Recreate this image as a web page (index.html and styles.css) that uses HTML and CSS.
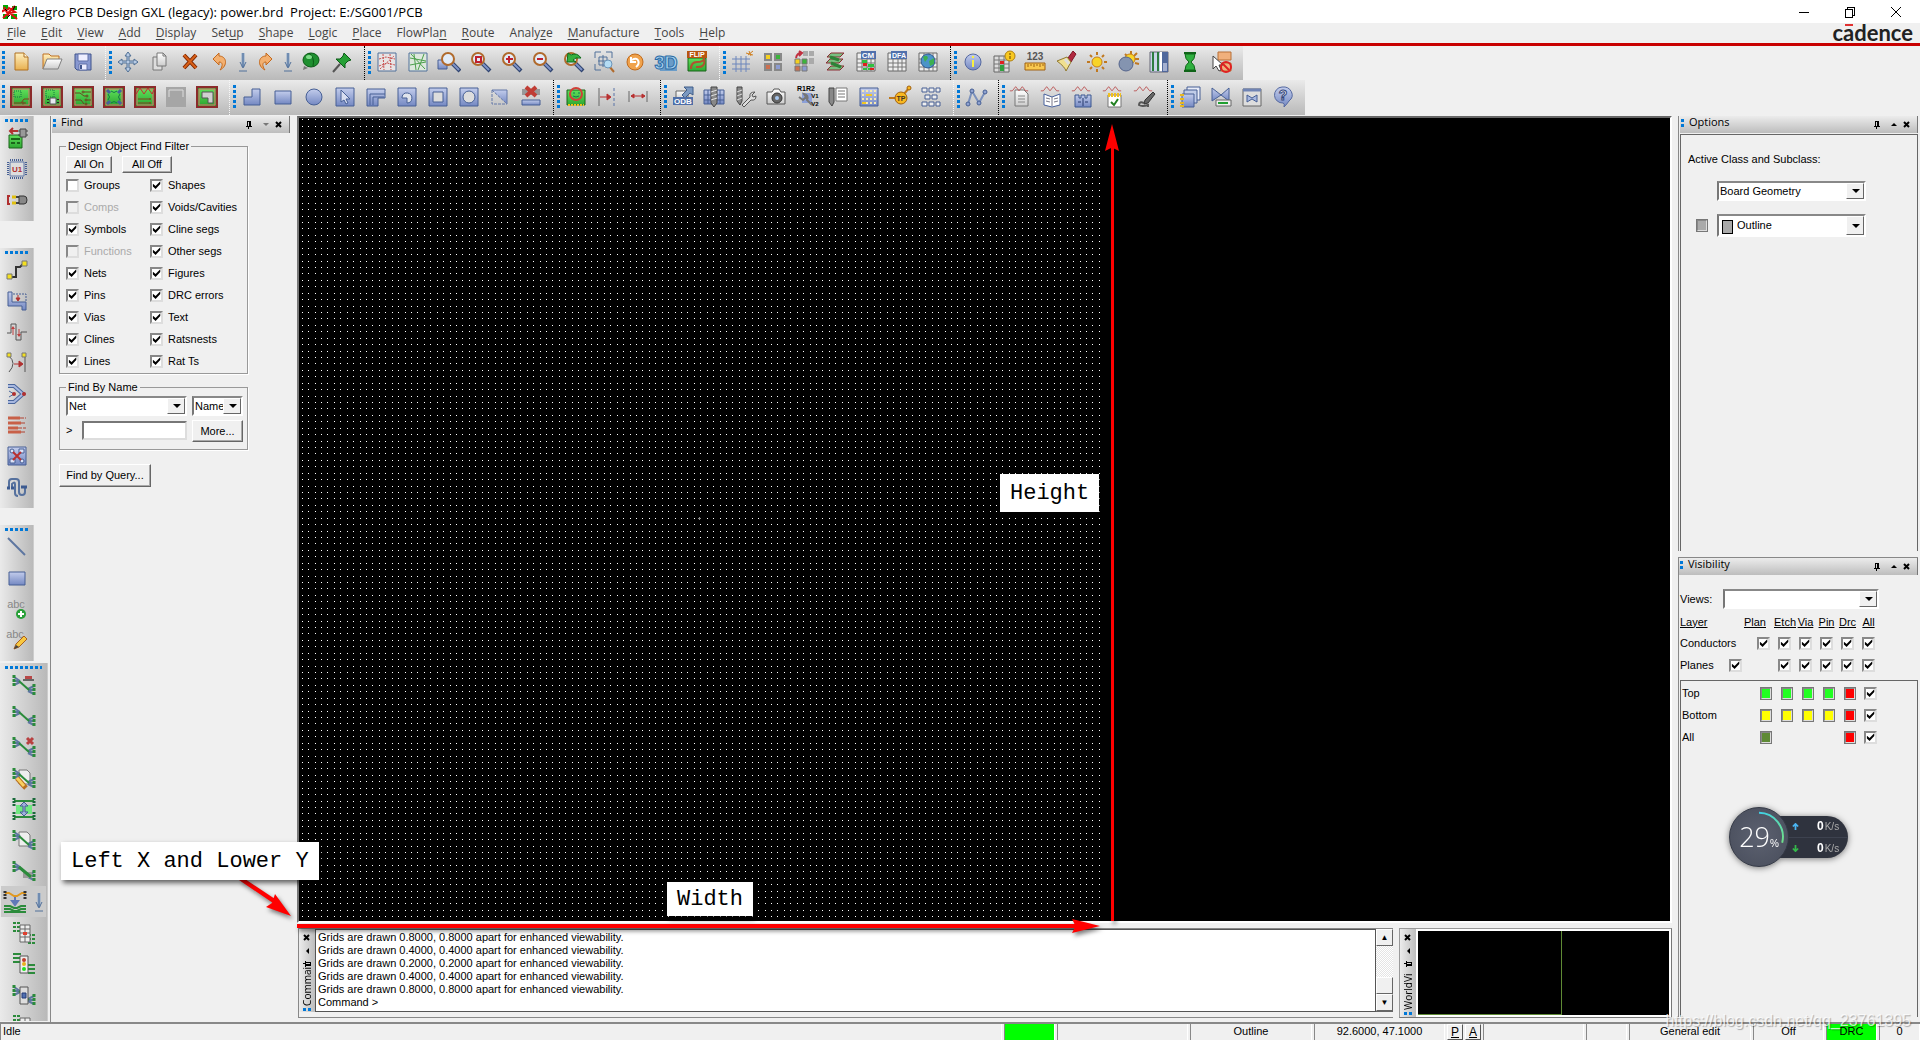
FILE: index.html
```html
<!DOCTYPE html>
<html lang="en">
<head>
<meta charset="utf-8">
<title>Allegro PCB Design GXL (legacy): power.brd Project: E:/SG001/PCB</title>
<link rel="stylesheet" href="styles.css">
</head>
<body>
<svg class="defs" aria-hidden="true">
<defs>
<linearGradient id="gb" x1="0" y1="0" x2="0" y2="1"><stop offset="0" stop-color="#c3cdec"/><stop offset="1" stop-color="#7488c2"/></linearGradient>
<linearGradient id="gy" x1="0" y1="0" x2="0" y2="1"><stop offset="0" stop-color="#fff0c0"/><stop offset="1" stop-color="#e8b050"/></linearGradient>
<linearGradient id="gg" x1="0" y1="0" x2="0" y2="1"><stop offset="0" stop-color="#5fe05a"/><stop offset="1" stop-color="#2ea832"/></linearGradient>
<linearGradient id="gw" x1="0" y1="0" x2="0" y2="1"><stop offset="0" stop-color="#fff"/><stop offset="1" stop-color="#ccc"/></linearGradient>
<linearGradient id="arc" x1="0" y1="0" x2="1" y2="1"><stop offset="0" stop-color="#3fd0e8"/><stop offset="1" stop-color="#6fe08a"/></linearGradient>

<symbol id="app" viewBox="0 0 16 16"><path d="M1 1h5v4H1zM10 2h5v4h-5zM1 10h5v5H1zM9 10h6v5H9z" fill="#0a0"/><path d="M0 8c3-5 5 1 7-4l6 4-5 1 7 6M1 14l12-12M2 3l5 9" stroke="#e01010" stroke-width="2" fill="none"/><path d="M3 5l2 2M11 6l2-4M5 14l3-3" stroke="#000"/></symbol>

<symbol id="new" viewBox="0 0 24 24"><path d="M6 3h9l4 4v13H6z" fill="url(#gy)" stroke="#b07020"/><path d="M15 3v4h4" fill="#fff8e0" stroke="#b07020"/></symbol>
<symbol id="open" viewBox="0 0 24 24"><path d="M3 19V4h6l2 2h8v4" fill="url(#gy)" stroke="#c07020"/><path d="M3 19L7 9h15l-4 10z" fill="url(#gw)" stroke="#808080"/></symbol>
<symbol id="save" viewBox="0 0 24 24"><path d="M4 4h16v16H6l-2-2z" fill="#8898d0" stroke="#40548c"/><path d="M7 4h10v7H7zM8 14h8v6H8z" fill="#eef" stroke="#6070a8"/><path d="M9 15h2v4H9z" fill="#40548c"/></symbol>
<symbol id="move" viewBox="0 0 24 24"><path d="M12 2l3 4h-2v5h5V9l4 3-4 3v-2h-5v5h2l-3 4-3-4h2v-5H6v2l-4-3 4-3v2h5V6H9z" fill="#b8cbe4" stroke="#4f6f94"/></symbol>
<symbol id="copy" viewBox="0 0 24 24"><path d="M6 7h9v13H6z" fill="#ddd" stroke="#777"/><path d="M10 3h6l3 3v10h-9z" fill="url(#gw)" stroke="#777"/><path d="M16 3v3h3" fill="none" stroke="#777"/></symbol>
<symbol id="del" viewBox="0 0 24 24"><path d="M6 5l12 13M18 5L6 18" stroke="#7c2400" stroke-width="4"/><path d="M6 5l12 13M18 5L6 18" stroke="#d86018" stroke-width="2"/></symbol>
<symbol id="undo" viewBox="0 0 24 24"><path d="M4 9l6-6v3c8 0 9 10 1 14 3-4 3-8-1-8v3z" fill="#f3b070" stroke="#c4681c"/></symbol>
<symbol id="redo" viewBox="0 0 24 24"><path d="M18 9l-6-6v3c-8 0-9 10-1 14-3-4-3-8 1-8v3z" fill="#f3b070" stroke="#c4681c"/></symbol>
<symbol id="down" viewBox="0 0 12 24"><path d="M6 3v14" stroke="#8fa8c8" stroke-width="3"/><path d="M6 3v14M3 12l3 6 3-6" fill="none" stroke="#51709a"/><path d="M2 21h8" stroke="#51709a"/></symbol>
<symbol id="ball" viewBox="0 0 24 24"><path d="M5 16l-1 4 5-2z" fill="#777"/><ellipse cx="12" cy="10" rx="8" ry="7" fill="#1f8f30" stroke="#0b5a16"/><path d="M10 3q6 5 4 13" stroke="#0b5a16" fill="none"/><ellipse cx="10" cy="7" rx="3" ry="2" fill="#7fdc88"/></symbol>
<symbol id="pin" viewBox="0 0 24 24"><path d="M3 22l7-8" stroke="#555" stroke-width="2"/><path d="M14 3l7 7-3 1-3 3v4l-9-9h4l3-3z" fill="#25a035" stroke="#0b5a16"/></symbol>
<symbol id="rats" viewBox="0 0 24 24"><path d="M3 3h18v18H3z" fill="#e8e4e4" stroke="#51709a"/><path d="M4 9l7-2 9 2M4 16l8-3 8 2M8 4l1 16M15 4l1 16M5 19L19 6" stroke="#c85050" stroke-dasharray="2 1" fill="none"/></symbol>
<symbol id="grats" viewBox="0 0 24 24"><path d="M3 3h18v18H3z" fill="#dde8dd" stroke="#51709a"/><path d="M4 8l16 3M4 15l16-3M8 4l2 16M18 4l-6 16M5 4l14 15" stroke="#4ca04c" fill="none"/></symbol>
<symbol id="lens" viewBox="0 0 24 24"><path d="M14 13l8 8" stroke="#2f4470" stroke-width="4"/><path d="M14 13l7 7" stroke="#8094c8" stroke-width="2"/><circle cx="10" cy="9" r="6" fill="#e2ecf8" stroke="#b06a2c" stroke-width="2"/></symbol>
<symbol id="zrect" viewBox="0 0 24 24"><path d="M1 10h9v9H1z" fill="url(#gb)" stroke="#465f94"/><use href="#lens" x="1" y="0" width="24" height="24"/></symbol>
<symbol id="zwin" viewBox="0 0 24 24"><use href="#lens" width="24" height="24"/><path d="M8 7h5v5H8z" fill="none" stroke="#c02030" stroke-width="2"/></symbol>
<symbol id="zin" viewBox="0 0 24 24"><use href="#lens" width="24" height="24"/><path d="M10 6v7M7 9h7" stroke="#c02030" stroke-width="2"/></symbol>
<symbol id="zout" viewBox="0 0 24 24"><use href="#lens" width="24" height="24"/><path d="M7 9h6" stroke="#c02030" stroke-width="2"/></symbol>
<symbol id="zprev" viewBox="0 0 24 24"><use href="#lens" width="24" height="24"/><path d="M6 12l1-9 3 2q6-3 10 3-6-1-8 2l3 2z" fill="#36b040" stroke="#0f6a1a"/></symbol>
<symbol id="zsel" viewBox="0 0 24 24"><path d="M3 8V2h6M14 2h6v6M3 14v6h6M11 5v12M6 11h11M7 7h8v8H7z" fill="none" stroke="#51709a" stroke-width="1"/><path d="M17 16l5 6" stroke="#b06a2c" stroke-width="2"/><circle cx="16" cy="14" r="4" fill="#b4dcf4" stroke="#6b94b8"/></symbol>
<symbol id="refresh" viewBox="0 0 24 24"><circle cx="12" cy="12" r="8" fill="#f0a24c" stroke="#c06a1c"/><path d="M8 7v5h5M9 10c6-4 9 3 4 7" fill="none" stroke="#fff" stroke-width="2"/></symbol>
<symbol id="three" viewBox="0 0 24 24"><path d="M3 6h16l4 5v10H6z" fill="#6a9cc8"/><text x="12" y="19" text-anchor="middle" font-size="18" font-weight="bold" fill="#a9d2f0" stroke="#2c6ca4">3D</text></symbol>
<symbol id="flip" viewBox="0 0 24 24"><path d="M3 8h18v13H3z" fill="url(#gg)" stroke="#1b651b"/><path d="M6 19q0-7 6-7t7-3q2 9-8 8" fill="none" stroke="#b05030" stroke-width="2"/><path d="M2 1h20v7H2z" fill="#b85410"/><text x="12" y="7" text-anchor="middle" font-size="7" font-weight="bold" fill="#fff">FLIP</text></symbol>
<symbol id="grid" viewBox="0 0 24 24"><path d="M6 6v16M11 6v16M16 6v16M2 9h18M2 14h18M2 19h18" stroke="#6c86bc" stroke-width="1"/><path d="M18 5l5-4M19 1l2 5M16 3l7 2" stroke="#d08020"/></symbol>
<symbol id="color" viewBox="0 0 24 24"><g stroke="#888" stroke-width="2"><path d="M4 4h6v6H4z" fill="#f4d020"/><path d="M14 4h6v6h-6z" fill="#3cb43c"/><path d="M4 14h6v6H4z" fill="#cc7050"/><path d="M14 14h6v6h-6z" fill="#8c9cd0"/></g></symbol>
<symbol id="color2" viewBox="0 0 24 24"><path d="M11 1h5v5h-5zM17 1h5v5h-5zM17 8h5v6h-5z" fill="#aaa"/><path d="M4 8q1-5 5-5M7 1l3 2-3 3" stroke="#c03040" stroke-width="2" fill="none"/><g stroke="#777"><path d="M3 9h5v5H3z" fill="#f4d020"/><path d="M10 9h5v5h-5z" fill="#3cb43c"/><path d="M3 16h5v5H3z" fill="#cc7050"/><path d="M10 16h5v5h-5z" fill="#8c9cd0"/></g></symbol>
<symbol id="layers" viewBox="0 0 24 24"><path d="M8 3h13l-4 4H4zM7 9h13l-4 4H3zM8 16h13l-4 4H4z" fill="#78c080" stroke="#8c2c34"/><path d="M7 7l9 3M8 13l10 4" stroke="#2b8436" stroke-width="3"/></symbol>
<symbol id="sheet" viewBox="0 0 24 24"><path d="M3 3h18v18H3z" fill="#eee" stroke="#666"/><path d="M3 9h18M3 13h18M3 17h18M8 3v18M13 3v18M17 3v18" stroke="#777"/></symbol>
<symbol id="cm" viewBox="0 0 24 24"><use href="#sheet" width="24" height="24"/><path d="M8 10h5v3H8zM14 14h6v3h-6zM9 18h4v2H9zM14 18h6v2h-6z" fill="#30c040"/><path d="M9 13h4v3H9zM16 18h4v2h-4z" fill="#e02020"/><path d="M7 1h15v8H7z" fill="#5070ac"/><text x="14" y="8" text-anchor="middle" font-size="8" font-weight="bold" fill="#fff">CM</text></symbol>
<symbol id="dfa" viewBox="0 0 24 24"><use href="#sheet" width="24" height="24"/><path d="M6 1h16v8H6z" fill="#5070ac"/><text x="14" y="8" text-anchor="middle" font-size="7" font-weight="bold" fill="#fff">DFA</text></symbol>
<symbol id="world" viewBox="0 0 24 24"><use href="#sheet" width="24" height="24"/><circle cx="12" cy="11" r="7" fill="#4c94c8" stroke="#305890"/><path d="M7 7q4-3 5 1l-3 4zM13 11l5-3v6l-4 2z" fill="#3cb050"/></symbol>
<symbol id="info" viewBox="0 0 24 24"><circle cx="12" cy="12" r="8" fill="url(#gb)" stroke="#5468a0"/><path d="M12 10v7M12 6v2" stroke="#f8f040" stroke-width="2"/></symbol>
<symbol id="tinfo" viewBox="0 0 24 24"><path d="M2 6h15v16H2z" fill="#ddd" stroke="#666"/><path d="M2 10h15M2 14h15M2 18h15M7 6v16M12 6v16" stroke="#777"/><path d="M8 11h4v3H8z" fill="#e02020"/><path d="M8 15h4v6H8z" fill="#30a040"/><circle cx="18" cy="6" r="5" fill="#f8c820" stroke="#b08010"/><path d="M18 3v2M18 6v3" stroke="#604000"/></symbol>
<symbol id="ruler" viewBox="0 0 24 24"><text x="12" y="10" text-anchor="middle" font-size="10" font-weight="bold" fill="#555">123</text><path d="M2 13h20v7H2z" fill="#f8c850" stroke="#a06010"/><path d="M5 14v3M8 14v2M11 14v3M14 14v2M17 14v3M20 14v2" stroke="#a06010"/></symbol>
<symbol id="brush" viewBox="0 0 24 24"><path d="M14 8l5-7 3 3-5 8z" fill="#b02840" stroke="#801828"/><path d="M3 11l10-4 4 5-5 9q-1-4-9-10z" fill="#f0e090" stroke="#907830"/><path d="M11 9l4 5" stroke="#ddd" stroke-width="3"/></symbol>
<symbol id="sun" viewBox="0 0 24 24"><path d="M12 2v3M12 19v3M2 12h3M19 12h3M5 5l2 2M17 17l2 2M19 5l-2 2M5 19l2-2" stroke="#c07820" stroke-width="2"/><circle cx="12" cy="12" r="5" fill="#f8d428" stroke="#c88018"/></symbol>
<symbol id="shade" viewBox="0 0 24 24"><path d="M15 1v4M19 13l4 1M9 4l2 2M21 3l-3 3M18 9h5" stroke="#c07820" stroke-width="2"/><circle cx="14" cy="9" r="5" fill="#f8d428" stroke="#c88018"/><circle cx="10" cy="14" r="7" fill="#8494b0" stroke="#54648c"/></symbol>
<symbol id="bands" viewBox="0 0 24 24"><path d="M3 2h18v20H3z" fill="#c8d4e8" stroke="#667"/><path d="M5 2h2v19H5zM10 2h2v19h-2z" fill="#2c7c40"/><path d="M13 2h2v19h-2z" fill="#fff"/><path d="M15 2h6v20h-6z" fill="#50689c"/><path d="M16 13h4v8h-4z" fill="#a4b0d0"/></symbol>
<symbol id="glass" viewBox="0 0 24 24"><path d="M7 4h10q0 5-4 8 4 3 4 8H7q0-5 4-8-4-3-4-8z" fill="#30b040" stroke="#0f6418"/><path d="M6 3h12M6 21h12" stroke="#0f6418" stroke-width="2"/></symbol>
<symbol id="nosel" viewBox="0 0 24 24"><path d="M9 2h13v8H9zM11 13h11v8H11z" fill="#f0b07c" stroke="#b87038"/><path d="M4 6v13l3-3 3 5 2-1-2-5h4z" fill="#fff" stroke="#444"/><circle cx="17" cy="17" r="5" fill="none" stroke="#e02020" stroke-width="2"/><path d="M14 14l6 6" stroke="#e02020" stroke-width="2"/></symbol>

<symbol id="pcb" viewBox="0 0 24 24"><path d="M2 2h20v20H2z" fill="#2da531" stroke="#8b2b2b" stroke-width="2"/><path d="M4 4h16v16H4z" fill="url(#gg)" stroke="#e07070"/></symbol>
<symbol id="p1" viewBox="0 0 24 24"><use href="#pcb" width="24" height="24"/><path d="M5 6h7v6H5z" fill="none" stroke="#174" stroke-dasharray="1 1"/><path d="M5 18h7l3-4h5M15 18h2" fill="none" stroke="#804020"/><circle cx="14" cy="18" r="1" stroke="#804020" fill="none"/></symbol>
<symbol id="p2" viewBox="0 0 24 24"><use href="#pcb" width="24" height="24"/><path d="M6 5h8v7H6z" fill="none" stroke="#174" stroke-dasharray="1 1"/><path d="M10 13h6v6h-6z" fill="#e8e8f0" stroke="#555"/><path d="M8 14v1M8 17v1M18 14v1M18 17v1" stroke="#222" stroke-width="2"/></symbol>
<symbol id="p3" viewBox="0 0 24 24"><use href="#pcb" width="24" height="24"/><path d="M4 8h5l4 3h2M4 15h6l3 4M13 7h7M16 15h4" fill="none" stroke="#6b4420"/><g fill="none" stroke="#6b4420"><circle cx="12" cy="7" r="1"/><circle cx="16" cy="11" r="1"/><circle cx="15" cy="15" r="1"/><circle cx="15" cy="19" r="1"/></g></symbol>
<symbol id="p4" viewBox="0 0 24 24"><use href="#pcb" width="24" height="24"/><path d="M9 6q3 3 6 0M9 18q3-3 6 0M6 9q3 3 0 6M18 9q-3 3 0 6" fill="none" stroke="#174" stroke-width="1"/><path d="M5 5l3 3M19 5l-3 3M5 19l3-3M19 19l-3-3" stroke="#46609c" stroke-width="3"/></symbol>
<symbol id="p5" viewBox="0 0 24 24"><use href="#pcb" width="24" height="24"/><path d="M3 9l4-6 4 6 4-6 4 6 3-6" fill="none" stroke="#c03030" stroke-width="1"/><path d="M5 14h11M5 18h11" stroke="#804020"/><circle cx="17" cy="14" r="1" fill="#804020"/><circle cx="17" cy="18" r="1" fill="#804020"/></symbol>
<symbol id="p6" viewBox="0 0 24 24"><path d="M2 2h20v20H2z" fill="#a6a6a6"/><path d="M5 12V5h14v7" fill="none" stroke="#ddd"/></symbol>
<symbol id="p7" viewBox="0 0 24 24"><use href="#pcb" width="24" height="24"/><path d="M7 7h11v11h-5v-5H7z" fill="#d0d0d0" stroke="#555"/></symbol>
<symbol id="s1" viewBox="0 0 24 24"><path d="M12 4h8v16H4v-8h8z" fill="url(#gb)" stroke="#465f94"/></symbol>
<symbol id="s2" viewBox="0 0 24 24"><path d="M4 6h16v13H4z" fill="url(#gb)" stroke="#465f94"/></symbol>
<symbol id="s3" viewBox="0 0 24 24"><circle cx="12" cy="12" r="8" fill="url(#gb)" stroke="#465f94"/></symbol>
<symbol id="s0" viewBox="0 0 24 24"><path d="M3 3h18v18H3z" fill="url(#gb)" stroke="#465f94"/></symbol>
<symbol id="s4" viewBox="0 0 24 24"><use href="#s0" width="24" height="24"/><path d="M8 5v12l3-2 2 4 2-1-2-4h4z" fill="#d8def0" stroke="#465f94"/></symbol>
<symbol id="s5" viewBox="0 0 24 24"><path d="M3 4h18v9h-7v8H3z" fill="url(#gb)" stroke="#465f94"/><path d="M6 20V9h15M9 20v-8h11" fill="none" stroke="#465f94"/></symbol>
<symbol id="s6" viewBox="0 0 24 24"><use href="#s0" width="24" height="24"/><path d="M7 12a5 5 0 1 1 5 6v-5H7z" fill="#e0e4ec" stroke="#465f94"/></symbol>
<symbol id="s7" viewBox="0 0 24 24"><use href="#s0" width="24" height="24"/><path d="M7 7h10v10H7z" fill="#ddd" stroke="#465f94"/></symbol>
<symbol id="s8" viewBox="0 0 24 24"><use href="#s0" width="24" height="24"/><circle cx="12" cy="12" r="6" fill="#ddd" stroke="#465f94"/></symbol>
<symbol id="s9" viewBox="0 0 24 24"><path d="M4 5h15v14z" fill="url(#gb)"/><path d="M4 5h15v14" fill="none" stroke="#6478a8"/><path d="M4 5v14h15M4 5l15 14" fill="none" stroke="#6478a8" stroke-dasharray="3 1"/></symbol>
<symbol id="s10" viewBox="0 0 24 24"><path d="M3 4h18v6H3z" fill="#999"/><path d="M7 2l10 9M17 2L7 11" stroke="#c03c34" stroke-width="4"/><path d="M3 15h18v5H3z" fill="url(#gb)" stroke="#465f94"/></symbol>
<symbol id="drc" viewBox="0 0 24 24"><path d="M3 5h18v15H3z" fill="url(#gg)" stroke="#1b651b"/><path d="M4 20h16" stroke="#f0c020" stroke-width="2" stroke-dasharray="2 1"/><circle cx="12" cy="9" r="6" fill="none" stroke="#d04038" stroke-width="2"/><path d="M9 8h2M14 8h2M9 11q3 2 6 0" stroke="#175" fill="none"/></symbol>
<symbol id="dim1" viewBox="0 0 24 24"><path d="M4 3v18" stroke="#666"/><path d="M19 3v18" stroke="#5a74a8" stroke-dasharray="3 2"/><path d="M5 12h10M12 9l4 3-4 3z" stroke="#b83030" fill="#b83030"/></symbol>
<symbol id="dim2" viewBox="0 0 24 24"><path d="M3 6v11M21 6v11" stroke="#666"/><path d="M5 11h14M8 9l-3 2 3 2zM16 9l3 2-3 2z" stroke="#b83030" fill="#b83030"/></symbol>
<symbol id="odb" viewBox="0 0 24 24"><path d="M5 6h12v8H5z" fill="url(#gw)" stroke="#666"/><path d="M11 10l5-5-3-3h9v8l-3-2-5 5z" fill="#7a98c0" stroke="#3f5c88"/><path d="M2 12h20v8H2z" fill="#4e6ea8"/><text x="12" y="19" text-anchor="middle" font-size="8" font-weight="bold" fill="#fff">ODB</text></symbol>
<symbol id="drill" viewBox="0 0 24 24"><path d="M2 5h20v14H2z" fill="url(#gb)" stroke="#465f94"/><path d="M2 10h20M2 15h20M6 5v14M18 5v14" stroke="#465f94"/><path d="M9 2h6v16l-3 4-3-4z" fill="#888" stroke="#444"/><path d="M9 7l6-2M9 11l6-2M9 15l6-2" stroke="#ddd"/></symbol>
<symbol id="wrench" viewBox="0 0 24 24"><path d="M4 2h5v14l-2 4-3-4z" fill="#888" stroke="#444"/><path d="M4 7l5-2M4 11l5-2M4 15l5-2" stroke="#ddd"/><path d="M9 20l8-8q-1-5 5-5l-3 3 1 2 3-1q0 5-5 4l-7 7z" fill="#ddd" stroke="#555"/></symbol>
<symbol id="camera" viewBox="0 0 24 24"><path d="M3 7h5l2-3h5l2 3h4v12H3z" fill="url(#gw)" stroke="#555"/><circle cx="13" cy="13" r="5" fill="#666" stroke="#333"/><circle cx="13" cy="13" r="2" fill="#a8c8f0"/></symbol>
<symbol id="auto" viewBox="0 0 24 24"><path d="M7 8h10v10H7z" fill="#8ca0d8"/><path d="M4 12l4 3 3-3-2-3q5 1 3 6l5 5" fill="none" stroke="#777" stroke-width="2"/><text x="11" y="6" text-anchor="middle" font-size="7" font-weight="bold" fill="#000">R1R2</text><text x="20" y="13" text-anchor="middle" font-size="6" font-weight="bold" fill="#000">V1</text><text x="20" y="21" text-anchor="middle" font-size="6" font-weight="bold" fill="#000">V2</text></symbol>
<symbol id="dlist" viewBox="0 0 24 24"><path d="M3 3h5v14l-2 4-3-4z" fill="#888" stroke="#444"/><path d="M10 3h11v13H10z" fill="#fff" stroke="#777"/><path d="M12 6h7M12 9h7M12 12h7" stroke="#777"/></symbol>
<symbol id="matrix" viewBox="0 0 24 24"><use href="#s0" width="24" height="24"/><path d="M5 6h14M5 10h14M5 14h14M5 18h14" stroke="#f4e8b0" stroke-width="2" stroke-dasharray="2 2"/><path d="M9 10h6M5 18h4" stroke="#f4c820" stroke-width="2"/></symbol>
<symbol id="tp" viewBox="0 0 24 24"><path d="M1 13h8M16 9l5-6" stroke="#c07818" stroke-width="2"/><circle cx="13" cy="13" r="6" fill="#f8b820" stroke="#a06010"/><circle cx="21" cy="3" r="2" fill="#f8b820" stroke="#a06010"/><text x="13" y="16" text-anchor="middle" font-size="7" font-weight="bold" fill="#432">TP</text></symbol>
<symbol id="mods" viewBox="0 0 24 24"><g fill="#eee" stroke="#465f94"><path d="M3 3h5v4H3zM10 3h5v4h-5zM17 3h4v4h-4zM6 10h5v4H6zM13 10h5v4h-5zM3 17h5v4H3zM10 17h5v4h-5zM17 17h4v4h-4z"/></g></symbol>
<symbol id="net" viewBox="0 0 24 24"><path d="M4 19L8 6l7 12 6-11" fill="none" stroke="#7a90bc" stroke-width="2"/><g fill="#8fa2d0" stroke="#465f94"><circle cx="4" cy="19" r="2"/><circle cx="8" cy="6" r="2"/><circle cx="15" cy="18" r="2"/><circle cx="21" cy="7" r="2"/></g></symbol>
<symbol id="wave" viewBox="0 0 24 24"><path d="M1 7h3l4-5 4 5 4-5 4 5h3" fill="none" stroke="#b84848" stroke-width="1"/></symbol>
<symbol id="w1" viewBox="0 0 24 24"><path d="M6 5h9l4 4v12H6z" fill="url(#gw)" stroke="#777"/><path d="M9 11h7M9 14h7M9 17h7" stroke="#888"/><use href="#wave" width="20" height="20"/></symbol>
<symbol id="w2" viewBox="0 0 24 24"><use href="#wave" width="20" height="20"/><path d="M4 9l8 3 8-3v11l-8 2-8-2z" fill="#fff" stroke="#46609c"/><path d="M12 12v9M6 13l4 1M6 16l4 1M14 14l4-1M14 17l4-1" stroke="#778"/></symbol>
<symbol id="w3" viewBox="0 0 24 24"><use href="#wave" width="20" height="20"/><path d="M4 10h4v3h2v-3h4v3h2v-3h4v12H4z" fill="url(#gb)" stroke="#3a5690"/><path d="M7 17h3M14 17h3M12 13v8" stroke="#24386c"/></symbol>
<symbol id="w4" viewBox="0 0 24 24"><use href="#wave" width="20" height="20"/><path d="M6 10h13v12H6z" fill="#fff" stroke="#777"/><path d="M6 10h13" stroke="#f0c020" stroke-width="4" stroke-dasharray="2 1"/><path d="M9 17l3 3 4-6" fill="none" stroke="#208020" stroke-width="2"/></symbol>
<symbol id="w5" viewBox="0 0 24 24"><use href="#wave" width="20" height="20"/><path d="M12 15l8-8 2 2-7 9-4 1z" fill="#666" stroke="#333"/><path d="M11 18q-5-2-5 2 3 2 9 0v2" fill="none" stroke="#555" stroke-width="2"/></symbol>
<symbol id="rep" viewBox="0 0 24 24"><path d="M9 2h13v13H9z" fill="#e8ecf8" stroke="#465f94"/><path d="M6 5h13v13H6z" fill="#c0cce8" stroke="#465f94"/><path d="M4 9h12v13H4z" fill="url(#gb)" stroke="#465f94"/><path d="M2 10h4M2 14h4M2 18h4M2 21h4" stroke="#e8b820" stroke-width="2"/></symbol>
<symbol id="bow" viewBox="0 0 24 24"><path d="M3 3l9 7 8-7v13l-8-6-9 6z" fill="url(#gb)" stroke="#465f94"/><path d="M7 15h15v6H7z" fill="#eee" stroke="#666"/><path d="M9 18h10" stroke="#20a030" stroke-width="2"/></symbol>
<symbol id="bowin" viewBox="0 0 24 24"><path d="M3 4h18v17H3z" fill="#ddd" stroke="#666"/><path d="M3 5h18" stroke="#7084b4" stroke-width="3"/><path d="M7 10l5 3 5-3v7l-5-3-5 3z" fill="#a8b8e0" stroke="#465f94"/></symbol>
<symbol id="help" viewBox="0 0 24 24"><path d="M11 2a9 8 0 0 1 7 14q-2 3-5 6 1-4-1-4A8 8 0 0 1 11 2z" fill="url(#gb)" stroke="#5468a0"/><text x="12" y="15" text-anchor="middle" font-size="14" font-weight="bold" fill="#fff" stroke="#34487c">?</text></symbol>

<symbol id="v1" viewBox="0 0 24 24"><path d="M4 9h13v13H4z" fill="url(#gg)" stroke="#1b651b"/><path d="M6 13h9M6 17h4M12 17h3" stroke="#1b651b" stroke-width="2"/><path d="M6 5h7M8 2L5 5l3 3" stroke="#b03030" fill="none" stroke-width="2"/><path d="M15 3h6v8h-6z" fill="#999" stroke="#444"/><path d="M13 5h2M13 9h2M21 5h2M21 9h2" stroke="#444"/></symbol>
<symbol id="v2" viewBox="0 0 24 24"><path d="M5 5h14v14H5z" fill="#ddd" stroke="#6078a8"/><path d="M5 3h14M5 21h14" stroke="#465f94" stroke-width="2" stroke-dasharray="1 1"/><path d="M3 5v14M21 5v14" stroke="#465f94" stroke-width="2" stroke-dasharray="1 1"/><text x="12" y="15" text-anchor="middle" font-size="8" font-weight="bold" fill="#b03030">U1</text></symbol>
<symbol id="v3" viewBox="0 0 24 24"><path d="M5 8H3v8h2" stroke="#b03030" fill="none" stroke-width="2"/><path d="M7 9h4M7 15h4" stroke="#e0c010" stroke-width="3"/><path d="M11 9h3M11 15h3" stroke="#444" stroke-width="2"/><path d="M14 8h5q3 0 3 4t-3 4h-5z" fill="#888" stroke="#333"/></symbol>
<symbol id="v4" viewBox="0 0 24 24"><path d="M5 19h6V9h4l4-4" fill="none" stroke="#333" stroke-width="2"/><path d="M2 16h5v5H2zM17 3h5v5h-5z" fill="#f4e020" stroke="#777"/></symbol>
<symbol id="v5" viewBox="0 0 24 24"><path d="M3 3v14h14v4h4v-8H7V3z" fill="url(#gb)" stroke="#465f94"/><path d="M8 5h13v7" fill="none" stroke="#465f94" stroke-dasharray="2 1"/><path d="M13 6v5M11 9l2 3 2-3z" stroke="#b03030" fill="#b03030"/></symbol>
<symbol id="v6" viewBox="0 0 24 24"><path d="M2 13h4V4h5v16h5v-8h6" fill="none" stroke="#555"/><path d="M8 8v7M14 9v7" stroke="#c04040"/><path d="M6 9l2-3 2 3zM12 14l2 3 2-3z" fill="#c04040"/></symbol>
<symbol id="v7" viewBox="0 0 24 24"><path d="M4 5q8 7 0 16M20 5v16" fill="none" stroke="#555"/><path d="M9 13h8M14 10l4 3-4 3z" stroke="#b03030" fill="#b03030"/><path d="M2 2h4v4H2zM17 2h4v4h-4z" fill="#f4e020" stroke="#777"/></symbol>
<symbol id="v8" viewBox="0 0 24 24"><path d="M3 4h6l9 8-9 8H3" fill="none" stroke="#4a669c" stroke-width="4"/><path d="M3 4h6l9 8-9 8H3" fill="none" stroke="#a8b8e0" stroke-width="2"/><path d="M4 9l5 3-5 3" fill="none" stroke="#4a669c"/><circle cx="9" cy="12" r="2" fill="#b03030"/><circle cx="19" cy="12" r="2" fill="#b03030"/></symbol>
<symbol id="v9" viewBox="0 0 24 24"><path d="M3 5h12M3 10h13M3 15h10M3 19h13" stroke="#c86048" stroke-width="3"/><path d="M15 5h6M16 10h5M13 15h8M16 19h5" stroke="#b04030" stroke-dasharray="4 1"/></symbol>
<symbol id="v10" viewBox="0 0 24 24"><use href="#s0" width="24" height="24"/><g fill="#dde4f8" stroke="#465f94"><path d="M14 5h5v4h-5zM5 15h5v4H5z"/><circle cx="7" cy="7" r="2"/><circle cx="17" cy="17" r="2"/></g><path d="M8 8l8 8M16 8l-8 8" stroke="#b83030" stroke-width="2"/></symbol>
<symbol id="v11" viewBox="0 0 24 24"><path d="M4 12V7q0-3 3-3h4q3 0 3 3v10q0 3 3 3t3-3v-5M7 12V9q3-3 3 0v9q0 3 3 3" fill="none" stroke="#56719e" stroke-width="2"/><path d="M2 13h3M6 13h3M16 12h6" stroke="#3c5a90" stroke-width="3"/></symbol>
<symbol id="line" viewBox="0 0 24 24"><path d="M3 3l17 17" stroke="#5d76a0" stroke-width="2"/></symbol>
<symbol id="abc1" viewBox="0 0 24 24"><text x="11" y="11" text-anchor="middle" font-size="11" fill="#888">abc</text><circle cx="16" cy="17" r="5" fill="#28a038"/><path d="M16 14v6M13 17h6" stroke="#fff" stroke-width="2"/></symbol>
<symbol id="abc2" viewBox="0 0 24 24"><text x="10" y="10" text-anchor="middle" font-size="11" fill="#888">abc</text><path d="M9 21l2-5 8-8 3 3-8 8z" fill="#f8c840" stroke="#a86020"/><path d="M9 21l2-4 3 2z" fill="#444"/></symbol>
<symbol id="bun" viewBox="0 0 24 24"><path d="M2 4l6 4M2 8h6M2 12l6-3M22 13l-6 3M22 17h-6M22 21l-6-3" stroke="#5d76a0" stroke-width="2"/><path d="M7 8l10 9" stroke="#2b8b3b" stroke-width="2"/><path d="M2 2v12M22 11v12" stroke="#2b8b3b" stroke-width="3" stroke-dasharray="3 1"/></symbol>
<symbol id="b1" viewBox="0 0 24 24"><use href="#bun" width="24" height="24"/><path d="M13 3h7v4h-7z" fill="#b84848"/><path d="M11 7h11" stroke="#666" stroke-width="2"/></symbol>
<symbol id="b3" viewBox="0 0 24 24"><use href="#bun" width="24" height="24"/><path d="M15 3l6 6M21 3l-6 6" stroke="#b84040" stroke-width="3"/></symbol>
<symbol id="doc" viewBox="0 0 24 24"><path d="M7 4h8l3 3v11H7z" fill="#eee" stroke="#777"/></symbol>
<symbol id="b4" viewBox="0 0 24 24"><use href="#doc" width="24" height="24"/><use href="#bun" width="24" height="24"/><path d="M5 12l7 8 2 2" stroke="#b87020" stroke-width="5"/><path d="M5 12l7 8" stroke="#f8d060" stroke-width="3"/></symbol>
<symbol id="b5" viewBox="0 0 24 24"><path d="M4 8h16v9H4z" fill="#70e880"/><path d="M2 4h20M2 20h20" stroke="#2b8b3b" stroke-width="2"/><path d="M2 1v8M22 1v8M2 15v8M22 15v8" stroke="#1a6a3a" stroke-width="3" stroke-dasharray="2 1"/><path d="M12 5l4 4h-3v6h3l-4 4-4-4h3V9H8z" fill="#9fb0dc" stroke="#465f94"/></symbol>
<symbol id="b6" viewBox="0 0 24 24"><use href="#doc" width="24" height="24"/><use href="#bun" width="24" height="24"/></symbol>
<symbol id="b7" viewBox="0 0 24 24"><use href="#bun" width="24" height="24"/><path d="M11 13h9v6h-9z" fill="#999"/><path d="M7 8l12 10" stroke="#2b8b3b" stroke-width="3"/></symbol>
<symbol id="b8" viewBox="0 0 24 24"><path d="M2 3h4l5 3h3l5-3h4" fill="none" stroke="#e09820" stroke-width="2"/><path d="M2 1v8M22 1v8" stroke="#333" stroke-width="3" stroke-dasharray="2 1"/><path d="M12 7v6M9 11l3 4 3-4z" stroke="#6078b8" stroke-width="2" fill="#a0b0e0"/><path d="M1 16h6l4 2h3l4-2h5M1 19h6l4 2h3l4-2h5M1 22h22" fill="none" stroke="#2b8b3b" stroke-width="2"/></symbol>
<symbol id="b9" viewBox="0 0 24 24"><path d="M1 2h8M1 6h8M1 10h8M16 14h7M16 18h7M16 22h7" stroke="#2b8b3b" stroke-width="2" stroke-dasharray="3 1"/><path d="M8 4h10v17H8z" fill="#eee" stroke="#666"/><path d="M8 8h10M8 12h10M8 16h10M13 4v17" stroke="#666"/><path d="M11 11h4v3h-4z" fill="#e04030"/></symbol>
<symbol id="b10" viewBox="0 0 24 24"><path d="M1 2h8M1 6h8M1 10h8M16 13h7M16 17h7M16 21h7" stroke="#2b8b3b" stroke-width="2"/><path d="M8 4h8v17H8z" fill="#eee" stroke="#555"/><circle cx="12" cy="8" r="2" fill="#c04030"/><circle cx="12" cy="12" r="2" fill="#e8b020"/><circle cx="12" cy="17" r="2" fill="#20e020"/></symbol>
<symbol id="b11" viewBox="0 0 24 24"><use href="#bun" width="24" height="24"/><path d="M8 4h8v17H8z" fill="#ddd" stroke="#555"/><path d="M10 10h4v5h-4z" fill="#5070b0" stroke="#243c78"/></symbol>

<symbol id="tpin" viewBox="0 0 8 8"><path d="M2 0h4v5H2zM3 1v4h1V1zM1 5h6v1H1zM3 6h1v2H3z" fill-rule="evenodd"/></symbol>
<symbol id="tup" viewBox="0 0 8 8"><path d="M1 5h6L4 2z"/></symbol>
<symbol id="tdn" viewBox="0 0 8 8"><path d="M1 2h6L4 5z" fill="#777"/></symbol>
<symbol id="tlf" viewBox="0 0 8 8"><path d="M6 1v6L3 4z"/></symbol>
<symbol id="tx" viewBox="0 0 8 8"><path d="M1 1l5 5M6 1L1 6" stroke="#000" stroke-width="2"/></symbol>
</defs>
</svg>

<div class="app">
<header class="titlebar">
  <svg class="appicon"><use href="#app"/></svg>
  <h1>Allegro PCB Design GXL (legacy): power.brd&nbsp; Project: E:/SG001/PCB</h1>
  <div class="winbtns">
    <button aria-label="Minimize"><svg viewBox="0 0 12 12"><path d="M1 6h10v1H1z"/></svg></button>
    <button aria-label="Restore"><svg viewBox="0 0 12 12"><path d="M1 3h8v9H1zM2 4v7h6V4zM3 1h8v9h-2V9h1V2H4v1H3z" fill-rule="evenodd"/></svg></button>
    <button aria-label="Close"><svg viewBox="0 0 12 12"><path d="M1 1l10 10M11 1L1 11" stroke="#000"/></svg></button>
  </div>
</header>
<nav class="menubar">
  <button><u>F</u>ile</button><button><u>E</u>dit</button><button><u>V</u>iew</button><button><u>A</u>dd</button><button><u>D</u>isplay</button><button>Set<u>u</u>p</button><button><u>S</u>hape</button><button><u>L</u>ogic</button><button><u>P</u>lace</button><button>FlowPla<u>n</u></button><button><u>R</u>oute</button><button>Analy<u>z</u>e</button><button><u>M</u>anufacture</button><button><u>T</u>ools</button><button><u>H</u>elp</button>
  <div class="brand">c<span class="macron">a</span>dence</div>
</nav>

<div class="toolrow">
  <div class="tb"><button aria-label="New"><svg><use href="#new"/></svg></button><button aria-label="Open"><svg><use href="#open"/></svg></button><button aria-label="Save"><svg><use href="#save"/></svg></button></div>
  <div class="tb"><button aria-label="Move"><svg><use href="#move"/></svg></button><button aria-label="Copy"><svg><use href="#copy"/></svg></button><button aria-label="Delete"><svg><use href="#del"/></svg></button><button aria-label="Undo"><svg><use href="#undo"/></svg></button><button class="slim" aria-label="Undo list"><svg><use href="#down"/></svg></button><button aria-label="Redo"><svg><use href="#redo"/></svg></button><button class="slim" aria-label="Redo list"><svg><use href="#down"/></svg></button><button aria-label="Fix"><svg><use href="#ball"/></svg></button><button aria-label="Unfix"><svg><use href="#pin"/></svg></button></div>
  <div class="tb dark"><button aria-label="Unrats all"><svg><use href="#rats"/></svg></button><button aria-label="Rats all"><svg><use href="#grats"/></svg></button><button aria-label="Zoom points"><svg><use href="#zrect"/></svg></button><button aria-label="Zoom fit"><svg><use href="#zwin"/></svg></button><button aria-label="Zoom in"><svg><use href="#zin"/></svg></button><button aria-label="Zoom out"><svg><use href="#zout"/></svg></button><button aria-label="Zoom previous"><svg><use href="#zprev"/></svg></button><button aria-label="Zoom selection"><svg><use href="#zsel"/></svg></button><button aria-label="Redraw"><svg><use href="#refresh"/></svg></button><button aria-label="3D"><svg><use href="#three"/></svg></button><button aria-label="Flip"><svg><use href="#flip"/></svg></button></div>
  <div class="tb"><button aria-label="Grid toggle"><svg><use href="#grid"/></svg></button><button aria-label="Color"><svg><use href="#color"/></svg></button><button aria-label="Color priority"><svg><use href="#color2"/></svg></button><button aria-label="Cross section"><svg><use href="#layers"/></svg></button><button aria-label="Constraint manager"><svg><use href="#cm"/></svg></button><button aria-label="DFA"><svg><use href="#dfa"/></svg></button><button aria-label="World"><svg><use href="#world"/></svg></button></div>
  <div class="tb dark"><button aria-label="Show element"><svg><use href="#info"/></svg></button><button aria-label="Constraint info"><svg><use href="#tinfo"/></svg></button><button aria-label="Measure"><svg><use href="#ruler"/></svg></button><button aria-label="Assign color"><svg><use href="#brush"/></svg></button><button aria-label="Highlight"><svg><use href="#sun"/></svg></button><button aria-label="Dehighlight"><svg><use href="#shade"/></svg></button><button aria-label="Shadow mode"><svg><use href="#bands"/></svg></button><button aria-label="Waive DRC"><svg><use href="#glass"/></svg></button><button aria-label="Datatips"><svg><use href="#nosel"/></svg></button></div>
</div>
<div class="toolrow second">
  <div class="tb"><button aria-label="General edit"><svg><use href="#p1"/></svg></button><button aria-label="Placement edit"><svg><use href="#p2"/></svg></button><button aria-label="Etch edit"><svg><use href="#p3"/></svg></button><button aria-label="Flow planning"><svg><use href="#p4"/></svg></button><button aria-label="Signal integrity"><svg><use href="#p5"/></svg></button><button aria-label="Unused mode" disabled><svg><use href="#p6"/></svg></button><button aria-label="Shape edit"><svg><use href="#p7"/></svg></button></div>
  <div class="tb"><button aria-label="Add polygon"><svg><use href="#s1"/></svg></button><button aria-label="Add rectangle"><svg><use href="#s2"/></svg></button><button aria-label="Add circle"><svg><use href="#s3"/></svg></button><button aria-label="Select shape"><svg><use href="#s4"/></svg></button><button aria-label="Edit boundary"><svg><use href="#s5"/></svg></button><button aria-label="Void polygon"><svg><use href="#s6"/></svg></button><button aria-label="Void rectangle"><svg><use href="#s7"/></svg></button><button aria-label="Void circle"><svg><use href="#s8"/></svg></button><button aria-label="Void element"><svg><use href="#s9"/></svg></button><button aria-label="Delete islands"><svg><use href="#s10"/></svg></button></div>
  <div class="tb dark"><button aria-label="Test prep"><svg><use href="#drc"/></svg></button><button aria-label="Linear dimension"><svg><use href="#dim1"/></svg></button><button aria-label="Edit dimension"><svg><use href="#dim2"/></svg></button></div>
  <div class="tb dark"><button aria-label="ODB out"><svg><use href="#odb"/></svg></button><button aria-label="Drill legend"><svg><use href="#drill"/></svg></button><button aria-label="NC setup"><svg><use href="#wrench"/></svg></button><button aria-label="Artwork"><svg><use href="#camera"/></svg></button><button aria-label="Auto rename"><svg><use href="#auto"/></svg></button><button aria-label="NC drill"><svg><use href="#dlist"/></svg></button><button aria-label="Thieving"><svg><use href="#matrix"/></svg></button><button aria-label="Test point"><svg><use href="#tp"/></svg></button><button aria-label="Panelize"><svg><use href="#mods"/></svg></button></div>
  <div class="tb"><button aria-label="Net schedule"><svg><use href="#net"/></svg></button></div>
  <div class="tb dark"><button aria-label="Signal report"><svg><use href="#w1"/></svg></button><button aria-label="Signal library"><svg><use href="#w2"/></svg></button><button aria-label="Signal model"><svg><use href="#w3"/></svg></button><button aria-label="Signal audit"><svg><use href="#w4"/></svg></button><button aria-label="Signal probe"><svg><use href="#w5"/></svg></button></div>
  <div class="tb dark"><button aria-label="Reports"><svg><use href="#rep"/></svg></button><button aria-label="DRC update"><svg><use href="#bow"/></svg></button><button aria-label="DRC window"><svg><use href="#bowin"/></svg></button><button aria-label="Help"><svg><use href="#help"/></svg></button></div>
</div>

<main class="main">
  <aside class="side">
    <div class="vb"><button aria-label="Place manual"><svg><use href="#v1"/></svg></button><button aria-label="Place component"><svg><use href="#v2"/></svg></button><button aria-label="Swap"><svg><use href="#v3"/></svg></button></div>
    <div class="vb"><button aria-label="Add connect"><svg><use href="#v4"/></svg></button><button aria-label="Slide"><svg><use href="#v5"/></svg></button><button aria-label="Delay tune"><svg><use href="#v6"/></svg></button><button aria-label="Custom smooth"><svg><use href="#v7"/></svg></button><button aria-label="Vertex"><svg><use href="#v8"/></svg></button><button aria-label="Spread"><svg><use href="#v9"/></svg></button><button aria-label="Fanout"><svg><use href="#v10"/></svg></button><button aria-label="Auto route"><svg><use href="#v11"/></svg></button></div>
    <div class="vb"><button aria-label="Add line"><svg><use href="#line"/></svg></button><button aria-label="Add rectangle"><svg><use href="#s2"/></svg></button><button aria-label="Add text"><svg><use href="#abc1"/></svg></button><button aria-label="Edit text"><svg><use href="#abc2"/></svg></button></div>
    <div class="vb wide"><button aria-label="Bundle create"><svg><use href="#b1"/></svg></button><button aria-label="Bundle add"><svg><use href="#bun"/></svg></button><button aria-label="Bundle delete"><svg><use href="#b3"/></svg></button><button aria-label="Bundle edit"><svg><use href="#b4"/></svg></button><button aria-label="Bundle resize"><svg><use href="#b5"/></svg></button><button aria-label="Bundle properties"><svg><use href="#b6"/></svg></button><button aria-label="Flow edit"><svg><use href="#b7"/></svg></button><button class="split" aria-label="Plan convert"><svg><use href="#b8"/></svg><svg class="arr"><use href="#down"/></svg></button><button aria-label="Plan table"><svg><use href="#b9"/></svg></button><button aria-label="Plan status"><svg><use href="#b10"/></svg></button><button aria-label="Plan view"><svg><use href="#b11"/></svg></button><button aria-label="Plan report"><svg><use href="#b9"/></svg></button></div>
  </aside>

  <section class="find">
    <div class="dockhead"><h2>Find</h2><svg><use href="#tpin"/></svg><svg><use href="#tdn"/></svg><svg><use href="#tx"/></svg></div>
    <form class="findbody">
      <fieldset class="filter"><legend>Design Object Find Filter</legend>
        <div class="pair"><button type="button" class="btn">All On</button><button type="button" class="btn">All Off</button></div>
        <div class="checks">
          <label><input type="checkbox">Groups</label><label><input type="checkbox" checked>Shapes</label>
          <label class="off"><input type="checkbox" disabled>Comps</label><label><input type="checkbox" checked>Voids/Cavities</label>
          <label><input type="checkbox" checked>Symbols</label><label><input type="checkbox" checked>Cline segs</label>
          <label class="off"><input type="checkbox" disabled>Functions</label><label><input type="checkbox" checked>Other segs</label>
          <label><input type="checkbox" checked>Nets</label><label><input type="checkbox" checked>Figures</label>
          <label><input type="checkbox" checked>Pins</label><label><input type="checkbox" checked>DRC errors</label>
          <label><input type="checkbox" checked>Vias</label><label><input type="checkbox" checked>Text</label>
          <label><input type="checkbox" checked>Clines</label><label><input type="checkbox" checked>Ratsnests</label>
          <label><input type="checkbox" checked>Lines</label><label><input type="checkbox" checked>Rat Ts</label>
        </div>
      </fieldset>
      <fieldset class="byname"><legend>Find By Name</legend>
        <span class="combo"><select aria-label="Object type"><option>Net</option></select></span>
        <span class="combo"><select aria-label="Match by"><option>Name</option></select></span>
        <label class="query">&gt;<input type="text" class="field"></label>
        <button type="button" class="btn">More...</button>
      </fieldset>
      <button type="button" class="btn querybtn">Find by Query...</button>
    </form>
  </section>

  <section class="work">
    <div class="canvas">
      <svg class="dots" width="802" height="100%" shape-rendering="crispEdges">
        <defs><path id="dotrow" d="M0 0h1v1H0zM7 0h1v1H7zM13 0h1v1h-1zM19 0h1v1h-1zM26 0h1v1h-1zM32 0h1v1h-1zM39 0h1v1h-1z"/>
        <pattern id="dotgrid" x="9" y="1" width="45" height="45" patternUnits="userSpaceOnUse"><g fill="#fff"><use href="#dotrow"/><use href="#dotrow" y="7"/><use href="#dotrow" y="13"/><use href="#dotrow" y="19"/><use href="#dotrow" y="26"/><use href="#dotrow" y="32"/><use href="#dotrow" y="39"/></g></pattern></defs>
        <rect width="802" height="100%" fill="url(#dotgrid)"/>
        <path d="M399 400h3M400 399v3" stroke="#888"/>
      </svg>
    </div>
    <div class="bottom">
      <section class="console">
        <div class="vhead"><svg><use href="#tx"/></svg><svg><use href="#tlf"/></svg><svg><use href="#tpin"/></svg><h2>Commai</h2></div>
        <div class="log">
          <p>Grids are drawn 0.8000, 0.8000 apart for enhanced viewability.</p>
          <p>Grids are drawn 0.4000, 0.4000 apart for enhanced viewability.</p>
          <p>Grids are drawn 0.2000, 0.2000 apart for enhanced viewability.</p>
          <p>Grids are drawn 0.4000, 0.4000 apart for enhanced viewability.</p>
          <p>Grids are drawn 0.8000, 0.8000 apart for enhanced viewability.</p>
          <label class="prompt">Command &gt;<input type="text"></label>
        </div>
        <div class="scroll"><button aria-label="Scroll up">&#9650;</button><span class="track"></span><span class="thumb"></span><button aria-label="Scroll down">&#9660;</button></div>
      </section>
      <section class="world">
        <div class="vhead"><svg><use href="#tx"/></svg><svg><use href="#tlf"/></svg><svg><use href="#tpin"/></svg><h2>WorldVi</h2></div>
        <div class="mini"><div class="board"></div></div>
      </section>
    </div>
    <svg class="marks" width="840" height="820">
      <g fill="#f00" stroke="none">
        <path d="M814 30h3v775h-3zM815 8l7 27-6-3h-2l-6 3z"/>
        <path d="M0 808h780v4H0zM803 810l-28 7 3-6v-2l-3-6z"/>
        <path d="M-58 764l3-3 33 22-2 4zM-6 800l-25-9 6-4 3-9z"/>
      </g>
    </svg>
    <div class="note n1">Left X and Lower Y</div>
    <div class="note n2">Width</div>
    <div class="note n3">Height</div>
  </section>

  <aside class="right">
    <section class="options">
      <div class="dockhead"><h2>Options</h2><svg><use href="#tpin"/></svg><svg><use href="#tup"/></svg><svg><use href="#tx"/></svg></div>
      <div class="optbody">
        <p>Active Class and Subclass:</p>
        <span class="combo cls"><select aria-label="Active class"><option>Board Geometry</option></select></span>
        <button class="sw" aria-label="Subclass color"></button>
        <span class="combo sub"><i class="chip"></i><select aria-label="Active subclass"><option>Outline</option></select></span>
      </div>
    </section>
    <section class="vis">
      <div class="dockhead"><h2>Visibility</h2><svg><use href="#tpin"/></svg><svg><use href="#tup"/></svg><svg><use href="#tx"/></svg></div>
      <div class="views"><label for="views">Views:</label><span class="combo"><select id="views"><option></option></select></span></div>
      <table class="layers">
        <tr class="head"><th class="name">Layer</th><th class="lead"></th><th class="plan">Plan</th><th>Etch</th><th>Via</th><th>Pin</th><th>Drc</th><th>All</th></tr>
        <tr><td class="name">Conductors</td><td></td><td><input type="checkbox" checked aria-label="Conductors plan"></td><td><input type="checkbox" checked aria-label="Conductors etch"></td><td><input type="checkbox" checked aria-label="Conductors via"></td><td><input type="checkbox" checked aria-label="Conductors pin"></td><td><input type="checkbox" checked aria-label="Conductors drc"></td><td><input type="checkbox" checked aria-label="Conductors all"></td></tr>
        <tr><td class="name">Planes</td><td><input type="checkbox" checked aria-label="Planes"></td><td></td><td><input type="checkbox" checked aria-label="Planes etch"></td><td><input type="checkbox" checked aria-label="Planes via"></td><td><input type="checkbox" checked aria-label="Planes pin"></td><td><input type="checkbox" checked aria-label="Planes drc"></td><td><input type="checkbox" checked aria-label="Planes all"></td></tr>
      </table>
      <div class="list">
      <table class="layers">
        <tr><td class="name">Top</td><td class="lead"></td><td><button class="sw green" aria-label="Top plan"></button></td><td><button class="sw green" aria-label="Top etch"></button></td><td><button class="sw green" aria-label="Top via"></button></td><td><button class="sw green" aria-label="Top pin"></button></td><td><button class="sw red" aria-label="Top drc"></button></td><td><input type="checkbox" checked aria-label="Top all"></td></tr>
        <tr><td class="name">Bottom</td><td></td><td><button class="sw yellow" aria-label="Bottom plan"></button></td><td><button class="sw yellow" aria-label="Bottom etch"></button></td><td><button class="sw yellow" aria-label="Bottom via"></button></td><td><button class="sw yellow" aria-label="Bottom pin"></button></td><td><button class="sw red" aria-label="Bottom drc"></button></td><td><input type="checkbox" checked aria-label="Bottom all"></td></tr>
        <tr><td class="name">All</td><td></td><td><button class="sw olive" aria-label="All plan"></button></td><td></td><td></td><td></td><td><button class="sw red" aria-label="All drc"></button></td><td><input type="checkbox" checked aria-label="All all"></td></tr>
      </table>
      </div>
      <div class="meter">
        <div class="rates">
          <p><svg viewBox="0 0 8 8"><path d="M4 8V2M1 4l3-3 3 3" fill="none" stroke="#4ab4f0" stroke-width="2"/></svg><b>0</b><span>K/s</span></p>
          <p><svg viewBox="0 0 8 8"><path d="M4 0v6M1 4l3 3 3-3" fill="none" stroke="#35b84a" stroke-width="2"/></svg><b>0</b><span>K/s</span></p>
        </div>
        <div class="dial"><svg viewBox="0 0 60 60"><path d="M30 5a25 25 0 0 1 24 31" fill="none" stroke="url(#arc)" stroke-width="2"/></svg><strong>29</strong><small>%</small></div>
      </div>
    </section>
  </aside>
</main>

<footer class="status">
  <span class="grow">Idle</span><span class="c51 on"></span><span class="c131"></span><span class="c122">Outline</span><span class="c131">92.6000, 47.1000</span><button>P</button><button>A</button><span class="c101"></span><span class="c41"></span><span class="c122">General edit</span><span class="c71">Off</span><span class="c51 on">DRC</span><span class="c41">0</span>
</footer>
<div class="watermark">https://blog.csdn.net/qq_23761395</div>
</div>
</body>
</html>
```
FILE: styles.css
```css
* { box-sizing: border-box; }
body { margin: 0; background: #f0f0f0; color: #000; font: 11px/13px "Liberation Sans", sans-serif; }
h1, h2, p { margin: 0; font-weight: normal; }
button, select, input { font: inherit; color: inherit; margin: 0; padding: 0; border-radius: 0; }
button { border: 0; background: none; }
svg { display: block; }
.defs { position: absolute; width: 0; height: 0; }
.app { position: relative; display: flex; flex-direction: column; min-height: 100vh; overflow: hidden; }

/* title and menu */
.titlebar { display: flex; align-items: center; height: 23px; background: #fff; padding: 0 1px 0 2px; }
.appicon { width: 16px; height: 16px; }
.titlebar h1 { flex: 1; margin-left: 5px; font: 13px/20px "Open Sans", sans-serif; white-space: nowrap; }
.winbtns { display: flex; }
.winbtns button { width: 46px; height: 20px; display: grid; place-items: center; }
.winbtns svg { width: 12px; height: 12px; }
.menubar { display: flex; align-items: center; height: 23px; border-bottom: 3px solid #c80000; padding: 0 7px; gap: 15px; font: 12px/20px "Open Sans", sans-serif; color: #444; }
.menubar u { text-underline-offset: 2px; }
.brand { margin-left: auto; font: bold 22px/20px Lato, sans-serif; color: #222; }
.macron { position: relative; }
.macron::before { content: ""; position: absolute; left: 2px; top: 5px; width: 8px; height: 2px; background: #e03030; }

/* horizontal toolbars */
.toolrow { display: flex; height: 34px; }
.toolrow.second { height: 36px; padding-bottom: 1px; }
.tb { display: flex; align-items: center; padding: 0 7px 2px 2px; background: linear-gradient(#eaeaea, #d6d6d6 40%, #b9b9b9); }
.tb + .tb { border-left: 1px dotted #f8f8f8; padding-left: 3px; }
.tb + .tb.dark { border-left-color: #000; }
.tb::before { content: ""; width: 3px; height: 23px; background: repeating-linear-gradient(#0078d7 0 3px, transparent 3px 5px); }
.tb button { width: 31px; height: 30px; display: grid; place-items: center; }
.tb button.slim { width: 14px; }
.tb svg, .vb svg { width: 24px; height: 24px; }
.tb .slim svg, .vb .arr { width: 12px; }

/* body columns */
.main { flex: 1; display: grid; grid-template-columns: 50px 247px 1fr 247px; min-height: 0; }
.side { height: 905px; overflow: hidden; display: flex; flex-direction: column; align-items: flex-start; }
.vb { flex: none; width: 34px; padding: 2px 0 6px; margin-bottom: 2px; display: flex; flex-direction: column; align-items: center; background: linear-gradient(90deg, #eaeaea, #d6d6d6 40%, #b9b9b9); border-right: 1px solid #ccc; }
.vb:nth-child(1) { margin-bottom: 27px; }
.vb:nth-child(2) { margin-bottom: 17px; }
.vb::before { content: ""; align-self: stretch; flex: none; height: 3px; margin: 1px 5px 0; background: repeating-linear-gradient(90deg, #0078d7 0 3px, transparent 3px 5px); }
.vb button { flex: none; height: 31px; width: 30px; display: grid; place-items: center; }
.vb.wide { width: 48px; }
.vb.wide .split { width: 45px; display: flex; align-items: center; gap: 6px; background: #cbcbcb; padding-left: 2px; }

.dockhead { display: flex; align-items: center; height: 17px; padding: 0 6px 0 1px; gap: 5px; background: linear-gradient(#ececec, #bdbdbd); border-right: 1px solid #777; }
.dockhead::before { content: ""; width: 3px; height: 8px; margin-bottom: 4px; background: repeating-linear-gradient(#0078d7 0 3px, transparent 3px 5px); }
.dockhead h2 { flex: 1; align-self: flex-start; font: 11px/12px "Open Sans", sans-serif; }
.dockhead svg { width: 8px; height: 8px; }
.dockhead h2 + svg { margin-right: 4px; }

/* find panel */
.find { border-left: 1px solid #888; padding: 0 7px 0 1px; }
.findbody { padding: 7px 0 0 7px; width: 196px; }
fieldset { margin: 0; border: 1px solid #999; padding: 0 4px 0 6px; min-width: 0; box-shadow: 1px 1px 0 #fff; }
legend { padding: 0 2px; margin-left: 0; }
.filter { height: 234px; }
.pair { display: flex; gap: 10px; margin-top: 3px; }
.btn { background: #f0f0f0; border: 1px solid; border-color: #fff #666 #666 #fff; box-shadow: inset -1px -1px #aaa; }
.pair .btn { width: 46px; height: 17px; line-height: 13px; }
.pair .btn + .btn { width: 50px; }
.checks { display: grid; grid-template-columns: 84px 1fr; grid-auto-rows: 22px; margin-top: 1px; white-space: nowrap; }
.checks label { display: flex; align-items: center; gap: 5px; }
.off { color: #aaa; }
input[type=checkbox] { appearance: none; flex: none; width: 13px; height: 13px; background: #fff; border: 2px solid; border-color: #888 #ddd #ddd #888; display: block; }
input[type=checkbox]:disabled { background: #f0f0f0; }
input:checked::before { content: ""; display: block; width: 9px; height: 9px; background: #000; clip-path: polygon(10% 35%, 40% 62%, 92% 8%, 92% 40%, 40% 95%, 10% 66%); }
.byname { margin-top: 7px; height: 69px; display: grid; grid-template-columns: 121px 51px; gap: 4px 5px; align-content: start; }
.byname legend { margin-bottom: 2px; }
.combo { position: relative; display: block; height: 20px; background: #fff; border: 2px solid; border-color: #888 #fff #fff #777; outline: 0; }
.combo::after { content: ""; position: absolute; right: 0; top: 0; bottom: 0; width: 16px; border: 1px solid; border-color: #fff #666 #666 #fff; background: #f0f0f0; pointer-events: none; }
.combo::before { content: ""; position: absolute; z-index: 1; right: 4px; top: 50%; margin-top: -2px; border: 4px solid transparent; border-top-color: #000; border-bottom: 0; pointer-events: none; }
.combo select { appearance: none; width: 100%; height: 100%; border: 0; background: none; padding-left: 1px; display: block; }
.query { display: flex; justify-content: space-between; align-items: center; height: 20px; }
.field { width: 105px; height: 19px; border: 2px solid; border-color: #777 #ddd #ddd #777; background: #fff; }
.byname .btn { height: 22px; }
.querybtn { width: 92px; height: 23px; margin-top: 14px; }

/* drawing area */
.work { position: relative; display: flex; flex-direction: column; min-width: 0; padding-right: 1px; }
.canvas { flex: 1; background: #000; border: 2px solid; border-color: #666 #fff #fff #777; position: relative; min-height: 0; }
.dots { position: absolute; left: 0; top: 0; }
.bottom { display: flex; gap: 6px; height: 99px; padding: 5px 0 4px 1px; }
.console, .world { display: flex; background: #f0f0f0; }
.console { flex: 1; border: 1px solid #888; border-right: 0; padding-bottom: 5px; }
.vhead { width: 16px; display: flex; flex-direction: column; align-items: center; gap: 5px; padding: 5px 0 2px; background: linear-gradient(90deg, #ececec, #bdbdbd); }
.vhead svg { flex: none; width: 8px; height: 8px; }
.vhead svg:nth-of-type(3) { transform: rotate(90deg); }
.vhead h2 { flex: 1; writing-mode: vertical-rl; transform: rotate(180deg); font: 10px/14px "Open Sans", sans-serif; margin: -6px 0 -3px; }
.vhead::after { content: ""; flex: none; width: 8px; height: 3px; background: repeating-linear-gradient(90deg, #0078d7 0 3px, transparent 3px 5px); }
.log { flex: 1; background: #fff; border: 1px solid #555; padding: 1px 2px; }
.prompt { display: flex; }
.prompt input { flex: 1; border: 0; background: none; height: 13px; outline: 0; }
.scroll { width: 17px; display: flex; flex-direction: column; border-bottom: 1px solid #666; background: repeating-conic-gradient(#fff 0 25%, #e4e4e4 0 50%) 0 0 / 2px 2px; }
.scroll button, .thumb { height: 17px; background: #f0f0f0; border: 1px solid; border-color: #fff #666 #666 #fff; font-size: 8px; line-height: 12px; }
.track { flex: 1; }
.world { width: 273px; border: 1px solid; border-color: #999 #777 #777 #999; }
.mini { flex: 1; border: 2px solid #fff; background: #000; }
.board { width: 144px; height: 100%; border: solid #5f8a35; border-width: 0 1px 1px 0; }
.marks { position: absolute; left: 0; top: 0; overflow: visible; z-index: 3; pointer-events: none; filter: drop-shadow(2px 3px 2px rgba(0,0,0,.5)); }
.note { position: absolute; z-index: 4; background: #fff; padding: 2px 10px 0; font: 22px/36px "Liberation Mono", monospace; white-space: nowrap; box-shadow: 2px 3px 5px rgba(0,0,0,.6); }
.n1 { left: -236px; top: 726px; }
.n2 { left: 370px; top: 766px; line-height: 32px; }
.n3 { left: 703px; top: 358px; }

/* right dock */
.right { display: flex; flex-direction: column; gap: 6px; padding: 0 2px 5px 5px; }
.options { height: 435px; border-left: 1px solid #888; padding-left: 1px; }
.optbody { height: 417px; margin-top: 1px; border: 1px solid #666; border-bottom: 0; padding: 18px 7px; display: grid; grid-template-columns: 13px 149px; gap: 13px 16px; align-content: start; align-items: center; }
.optbody p { grid-column: 1 / 3; padding-bottom: 2px; }
.cls { grid-column: 2; }
.optbody .sw { margin-left: 8px; }
.sub { height: 23px; display: flex; align-items: center; }
.chip { flex: none; width: 11px; height: 14px; margin: 2px 3px 0; background: #aaa; border: 1px solid #000; }
.vis { position: relative; flex: 1; display: flex; flex-direction: column; border: solid #888; border-width: 1px 0 0 1px; }
.sw { display: block; width: 12px; height: 13px; background: #aaa; border: 2px solid; border-color: #888 #ddd #ddd #888; outline: 1px solid #777; outline-offset: -1px; }
.green { background: #2f2; }
.yellow { background: #ff0; }
.red { background: #f00; }
.olive { background: #5f8a35; }
.views { display: flex; align-items: center; padding: 14px 0 3px 1px; }
.views label { width: 43px; }
.views .combo { width: 156px; }
.layers { table-layout: fixed; border-collapse: collapse; width: 200px; }
.layers tr { height: 22px; }
.layers .head { height: 20px; }
.layers td, .layers th { padding: 0; width: 21px; font-weight: normal; }
.layers th { text-decoration: underline; }
.layers .name { width: 39px; text-align: left; padding-left: 1px; white-space: nowrap; }
.layers .lead { width: 35px; }
.layers .plan { direction: rtl; padding-right: 8px; }
.layers td > * { margin: 0 auto; }
.list { flex: 1; margin: 4px 0 0 1px; border: 1px solid #666; border-bottom: 0; padding-top: 1px; }

/* network meter */
.meter { position: absolute; left: 50px; top: 249px; display: flex; align-items: center; filter: drop-shadow(0 1px 3px rgba(0,0,0,.5)); }
.dial { position: relative; order: -1; width: 60px; height: 60px; border-radius: 50%; background: radial-gradient(#5c6170, #484d5b); border: 1px solid #343946; display: flex; align-items: baseline; justify-content: center; color: #fff; z-index: 1; }
.dial svg { position: absolute; inset: 0; }
.dial strong { font: 300 27px/58px "Open Sans", sans-serif; }
.dial small { font-size: 10px; }
.rates { width: 71px; height: 42px; margin-left: -12px; background: #2f333e; border-radius: 0 21px 21px 0; color: #fff; order: 1; }
.rates p { display: flex; align-items: center; height: 21px; padding-left: 15px; }
.rates p + p { border-top: 1px solid #3d424f; }
.rates svg { width: 7px; height: 7px; margin-right: 18px; }
.rates b { font-size: 12px; }
.rates span { color: #aaa; font-size: 10px; margin-left: 1px; }

/* status bar */
.status { display: flex; height: 18px; border-top: 2px solid #888; gap: 2px; text-align: center; line-height: 15px; }
.status span { border: solid #888; border-width: 0 0 0 1px; border-right: 1px solid #fff; white-space: nowrap; }
.status .grow { flex: 1; text-align: left; padding-left: 2px; }
.status .on { background: #0f0; }
.status button { width: 16px; border: 1px solid; border-color: #fff #555 #555 #fff; text-decoration: underline; font-size: 12px; line-height: 14px; }
.c41 { width: 41px; }
.c51 { width: 51px; }
.c71 { width: 71px; }
.c101 { width: 101px; }
.c122 { width: 122px; }
.c131 { width: 131px; }
.watermark { position: absolute; right: 9px; bottom: 9px; font: 16px/20px "Liberation Sans", sans-serif; color: rgba(255,255,255,.75); text-shadow: 1px 1px 1px rgba(0,0,0,.3); pointer-events: none; }
```
